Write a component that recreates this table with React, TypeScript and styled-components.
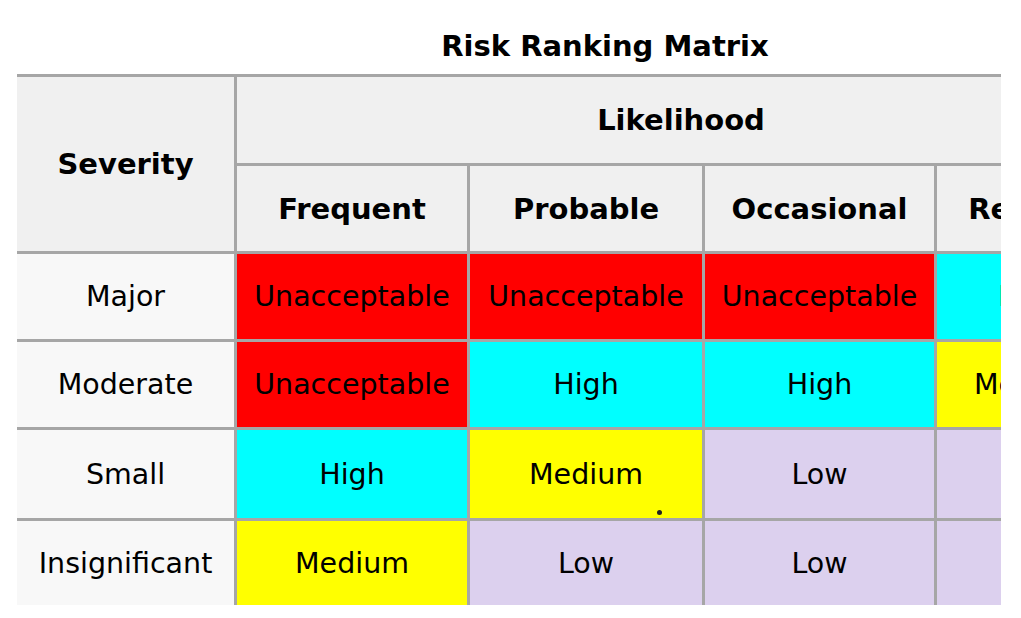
import React from "react";
import styled, { createGlobalStyle } from "styled-components";

const GlobalStyle = createGlobalStyle`
  html, body {
    margin: 0;
    padding: 0;
    background: #ffffff;
    overflow: hidden;
  }
  body {
    font-family: "DejaVu Sans", Verdana, sans-serif;
    color: #000000;
  }
`;

const Page = styled.div`
  padding: 29px 0 0 17px;
`;

const Viewport = styled.div`
  width: 984px;
  overflow: hidden;
`;

const Sheet = styled.div`
  width: 1176px;
  display: flex;
  flex-direction: column;
  gap: 11px;
`;

const Title = styled.h1`
  margin: 0;
  text-align: center;
  font-size: 29px;
  font-weight: bold;
  line-height: 34px;
`;

const Matrix = styled.div`
  display: grid;
  grid-template-columns: 217px 233px 235px 232px 191px;
  grid-template-rows: 89px 88px 88px 88px 91px 87px;
`;

type CellProps = {
  $bg: string;
  $first?: boolean;
  $bold?: boolean;
  $rowSpan?: number;
  $colSpan?: number;
};

const Cell = styled.div<CellProps>`
  box-sizing: border-box;
  position: relative;
  display: flex;
  align-items: center;
  justify-content: center;
  white-space: nowrap;
  background: ${(p) => p.$bg};
  border-top: 3px solid #a6a6a6;
  border-left: ${(p) => (p.$first ? "none" : "3px solid #a6a6a6")};
  font-size: ${(p) => (p.$bold ? "29px" : "28.5px")};
  font-weight: ${(p) => (p.$bold ? "bold" : "normal")};
  grid-row: ${(p) => (p.$rowSpan ? `span ${p.$rowSpan}` : "auto")};
  grid-column: ${(p) => (p.$colSpan ? `span ${p.$colSpan}` : "auto")};
  overflow: hidden;
`;

const Speck = styled.span`
  position: absolute;
  left: 187px;
  top: 80px;
  width: 5px;
  height: 5px;
  border-radius: 50%;
  background: #222;
`;

const HEADER_BG = "#f0f0f0";
const ROW_BG = "#f8f8f8";

const levelColor: Record<string, string> = {
  Unacceptable: "#ff0000",
  High: "#00ffff",
  Medium: "#ffff00",
  Low: "#dcd0ee",
};

const likelihoods = ["Frequent", "Probable", "Occasional", "Remote"];

const rows: { severity: string; levels: string[] }[] = [
  { severity: "Major", levels: ["Unacceptable", "Unacceptable", "Unacceptable", "High"] },
  { severity: "Moderate", levels: ["Unacceptable", "High", "High", "Medium"] },
  { severity: "Small", levels: ["High", "Medium", "Low", "Low"] },
  { severity: "Insignificant", levels: ["Medium", "Low", "Low", "Low"] },
];

export default function App() {
  return (
    <>
      <GlobalStyle />
      <Page>
        <Viewport>
          <Sheet>
            <Title>Risk Ranking Matrix</Title>
            <Matrix>
              <Cell $bg={HEADER_BG} $first $bold $rowSpan={2}>
                Severity
              </Cell>
              <Cell $bg={HEADER_BG} $bold $colSpan={4}>
                Likelihood
              </Cell>
              {likelihoods.map((l) => (
                <Cell key={l} $bg={HEADER_BG} $bold>
                  {l}
                </Cell>
              ))}
              {rows.map((r, ri) => (
                <React.Fragment key={r.severity}>
                  <Cell $bg={ROW_BG} $first>
                    {r.severity}
                  </Cell>
                  {r.levels.map((lv, ci) => (
                    <Cell key={ci} $bg={levelColor[lv]}>
                      {lv}
                      {ri === 2 && ci === 1 ? <Speck /> : null}
                    </Cell>
                  ))}
                </React.Fragment>
              ))}
            </Matrix>
          </Sheet>
        </Viewport>
      </Page>
    </>
  );
}
